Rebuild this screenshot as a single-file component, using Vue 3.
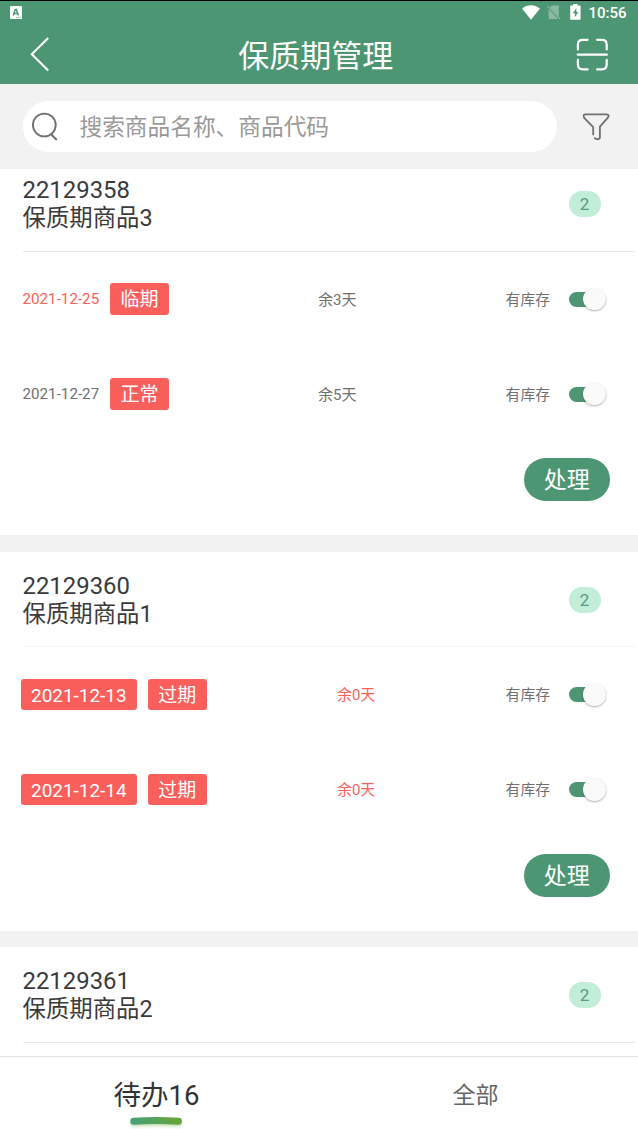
<template>
  <div class="page">
    <header class="header">
      <div class="status-bar">
        <svg class="app-icon" width="12" height="13" viewBox="0 0 12 13">
          <rect width="12" height="13" rx="1" fill="#fff" />
          <path d="M3.2 9.6L5.3 3.6h1L8.4 9.6M4.2 7.6h3.2" fill="none" stroke="#4c9674" stroke-width="1.5" />
          <path d="M6 11.3h5" stroke="#4c9674" stroke-width="0.7" stroke-dasharray="1.5 0.6" />
        </svg>
        <div class="status-right">
          <svg width="18" height="15" viewBox="0 0 18 15">
            <path d="M0 3.6C5.2 -0.9 12.8 -0.9 18 3.6L9 14.8z" fill="#fff" />
          </svg>
          <svg class="sim" width="14" height="15" viewBox="0 0 14 15">
            <path d="M4.6 0.6h7.2v11.2L2.9 2.8zM1.6 4.2l9.6 9.8H1.6z" fill="#8abaa2" />
            <path d="M0.5 1.2l12.6 13" stroke="#8abaa2" stroke-width="1.1" />
          </svg>
          <svg class="battery" width="11" height="16" viewBox="0 0 11 16">
            <path d="M3.2 0h4.4v1.6H10q0.6 0 0.6 0.6v12.9q0 0.6-0.6 0.6H0.8q-0.6 0-0.6-0.6V2.2q0-0.6 0.6-0.6h2.4z" fill="#fff" />
            <path d="M6.4 4L2.8 9.2h2.1v4L8.2 7.9H6.4z" fill="#4c9674" />
          </svg>
          <span class="time">10:56</span>
        </div>
      </div>
      <div class="nav-bar">
        <svg class="back" width="20" height="36" viewBox="0 0 20 36">
          <path d="M18.2 2L1.8 18.2L18.2 34.6" fill="none" stroke="#fff" stroke-width="2.1" />
        </svg>
        <h1 class="title">保质期管理</h1>
        <svg class="scan" width="32" height="33" viewBox="0 0 32 33">
          <g fill="none" stroke="#fff" stroke-width="2.2" stroke-linecap="round">
            <path d="M1.9 11.5V6.6Q1.9 1.8 6.7 1.8H11.6M21.1 1.8H25.9Q30.7 1.8 30.7 6.6V11.5" />
            <path d="M1.9 21.8V26.6Q1.9 31.4 6.7 31.4H11.6M21.1 31.4H25.9Q30.7 31.4 30.7 26.6V21.8" />
            <path d="M1.7 16.6H30.9" />
          </g>
        </svg>
      </div>
    </header>

    <div class="search-bar">
      <div class="search-input">
        <svg width="28" height="29" viewBox="0 0 28 29">
          <circle cx="12.3" cy="13" r="11.4" fill="none" stroke="#707070" stroke-width="1.9" />
          <path d="M18.6 21.8L24.8 28" stroke="#707070" stroke-width="2" />
        </svg>
        <span class="placeholder">搜索商品名称、商品代码</span>
      </div>
      <svg class="filter" width="28" height="28" viewBox="0 0 28 28">
        <path
          d="M11.2 22.2V14.2L2.2 4.8Q0.8 1.5 3 1.3H24.6Q27.6 1.5 26.1 4.4L17.9 13.6V24.8Q16.2 27.7 12.2 24.8"
          fill="none"
          stroke="#707070"
          stroke-width="1.8"
          stroke-linejoin="round"
        />
      </svg>
    </div>

    <main class="list">
      <section v-for="item in goods" :key="item.code" class="card">
        <div class="card-head" :class="{ light: item.code === '22129360' }">
          <div>
            <div class="code">{{ item.code }}</div>
            <div class="name">{{ item.name }}</div>
          </div>
          <span class="count">{{ item.count }}</span>
        </div>
        <div v-for="batch in item.batches" :key="batch.date" class="batch">
          <div class="date-box">
            <span v-if="batch.expired" class="tag date-tag">{{ batch.date }}</span>
            <span v-else class="date" :class="{ red: batch.warn }">{{ batch.date }}</span>
            <span class="tag">{{ batch.status }}</span>
          </div>
          <span class="days" :class="{ red: batch.expired }">余{{ batch.days }}天</span>
          <div class="stock" @click="batch.stock = !batch.stock">
            <span class="stock-text">有库存</span>
            <span class="switch" :class="{ on: batch.stock }"><i></i></span>
          </div>
        </div>
        <div v-if="item.batches.length" class="card-foot">
          <button class="handle">处理</button>
        </div>
      </section>
    </main>

    <footer class="tabs">
      <div
        v-for="tab in tabs"
        :key="tab.key"
        class="tab"
        :class="{ active: current === tab.key }"
        @click="current = tab.key"
      >
        {{ tab.label }}
        <svg v-if="current === tab.key" class="tab-line" width="60" height="18" viewBox="0 0 60 18">
          <defs>
            <linearGradient id="lineColor" gradientUnits="userSpaceOnUse" x1="4" y1="0" x2="56" y2="0">
              <stop offset="0" stop-color="#46a078" />
              <stop offset="1" stop-color="#69a538" />
            </linearGradient>
          </defs>
          <path d="M7.8 8.2Q30 6.6 52.4 8.2" fill="none" stroke="url(#lineColor)" stroke-width="7" stroke-linecap="round" />
        </svg>
      </div>
    </footer>
  </div>
</template>

<script setup>
import { ref } from 'vue'

const current = ref('todo')

const tabs = [
  { key: 'todo', label: '待办16' },
  { key: 'all', label: '全部' }
]

const goods = ref([
  {
    code: '22129358',
    name: '保质期商品3',
    count: 2,
    batches: [
      { date: '2021-12-25', status: '临期', days: 3, warn: true, expired: false, stock: true },
      { date: '2021-12-27', status: '正常', days: 5, warn: false, expired: false, stock: true }
    ]
  },
  {
    code: '22129360',
    name: '保质期商品1',
    count: 2,
    batches: [
      { date: '2021-12-13', status: '过期', days: 0, warn: true, expired: true, stock: true },
      { date: '2021-12-14', status: '过期', days: 0, warn: true, expired: true, stock: true }
    ]
  },
  {
    code: '22129361',
    name: '保质期商品2',
    count: 2,
    batches: []
  }
])
</script>

<style>
body {
  margin: 0;
  overflow: hidden;
}
</style>

<style scoped>
* {
  box-sizing: border-box;
}
.page {
  display: flex;
  flex-direction: column;
  width: 638px;
  height: 1129px;
  overflow: hidden;
  background: #f2f2f2;
  font-family: Roboto, "Noto Sans CJK SC", sans-serif;
  color: #3a3a3a;
}
svg {
  display: block;
  flex: none;
}
.header {
  flex: none;
  height: 84px;
  background: #4c9674;
  border-top: 1px solid #000;
  color: #fff;
}
.status-bar {
  display: flex;
  justify-content: space-between;
  align-items: center;
  height: 22px;
  padding: 0 11.5px 0 10px;
}
.status-right {
  display: flex;
  align-items: center;
}
.sim {
  margin-left: 7px;
}
.battery {
  margin-left: 9px;
}
.time {
  margin-left: 7px;
  padding-top: 2px;
  font-size: 15px;
  font-weight: 500;
  line-height: 20px;
}
.nav-bar {
  display: flex;
  justify-content: space-between;
  align-items: center;
  height: 62px;
  padding: 0 30px 0 29.5px;
}
.title {
  margin: 0;
  padding: 6px 0 0 6px;
  font-size: 31px;
  font-weight: 400;
  line-height: 56px;
}
.search-bar {
  flex: none;
  display: flex;
  align-items: center;
  height: 84.5px;
  padding-left: 22.5px;
}
.search-input {
  display: flex;
  align-items: center;
  width: 534px;
  height: 51px;
  padding-left: 9px;
  border-radius: 26px;
  background: #fff;
}
.placeholder {
  margin-left: 20px;
  padding-bottom: 1px;
  font-size: 22.7px;
  color: #999;
}
.filter {
  margin: 2px 0 0 25.5px;
}
.list {
  flex: 1;
  min-height: 0;
  overflow: hidden;
}
.card {
  height: 379px;
  margin-bottom: 16.5px;
  background: #fff;
}
.card:first-child {
  margin-top: -12.5px;
}
.card-head {
  display: flex;
  justify-content: space-between;
  align-items: center;
  height: 95.5px;
  margin: 0 3px 0 22.5px;
  padding: 1.5px 34.5px 0 0;
  border-bottom: 1.5px solid #e8e9e9;
}
.card-head.light {
  border-bottom-color: #f5f5f5;
}
.code {
  font-size: 23.9px;
  line-height: 28px;
}
.name {
  padding-top: 1px;
  font-size: 23.4px;
  line-height: 27px;
}
.count {
  width: 32px;
  height: 26px;
  border-radius: 13px;
  background: #c2edd9;
  color: #569c7c;
  font-size: 17px;
  line-height: 26px;
  text-align: center;
}
.batch {
  display: flex;
  justify-content: space-between;
  align-items: center;
  height: 95px;
  padding: 0 32px 0 22.5px;
  font-size: 15px;
  color: #707070;
}
.date-box {
  display: flex;
  align-items: center;
  gap: 10.5px;
}
.date {
  width: 77px;
  font-size: 15.2px;
}
.days,
.stock-text {
  padding-bottom: 2px;
}
.red {
  color: #fb5f5c;
}
.tag {
  height: 31.5px;
  padding: 1px 10.5px 0;
  border-radius: 3px;
  background: #fb5f5c;
  color: #fff;
  font-size: 19px;
  line-height: 31.5px;
}
.date-tag {
  margin-left: -2px;
  padding: 1px 10.5px 0;
  font-size: 18.95px;
}
.stock {
  display: flex;
  align-items: center;
  font-size: 14.8px;
}
.switch {
  display: flex;
  align-items: center;
  width: 36.5px;
  height: 15px;
  margin-left: 19.5px;
  border-radius: 8px;
  background: #ccc;
}
.switch i {
  width: 22.5px;
  height: 22.5px;
  border-radius: 50%;
  background: #fafafa;
  box-shadow: 0 1px 2px rgba(0, 0, 0, 0.3);
}
.switch.on {
  justify-content: flex-end;
  background: #4c9674;
}
.card-foot {
  display: flex;
  justify-content: flex-end;
  padding: 16.5px 28.5px 0 0;
}
.handle {
  width: 85.5px;
  height: 43px;
  padding: 2px 0 0;
  border: none;
  border-radius: 22px;
  background: #4c9674;
  color: #fff;
  font-family: inherit;
  font-size: 23px;
  line-height: 41px;
}
.tabs {
  flex: none;
  display: flex;
  height: 73px;
  border-top: 1px solid #e3e5e5;
  background: #fff;
}
.tab {
  position: relative;
  flex: 1;
  height: 72px;
  padding: 3px 6px 0 0;
  font-size: 23px;
  line-height: 72px;
  text-align: center;
  color: #666;
}
.tab.active {
  font-size: 27.5px;
  color: #333;
}
/* curved marker under the active label */
.tab-line {
  position: absolute;
  left: 126px;
  bottom: -2px;
  filter: drop-shadow(0 2px 1.5px rgba(105, 165, 56, 0.35));
}
</style>
